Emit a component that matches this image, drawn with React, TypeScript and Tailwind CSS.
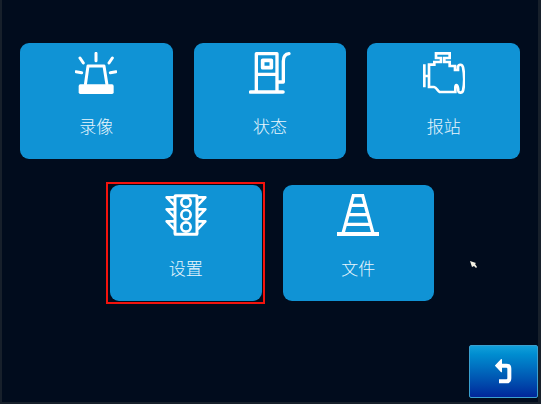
import type { ReactNode } from "react";

function Icon({ children }: { children: ReactNode }) {
  return (
    <svg
      viewBox="0 0 126 126"
      className="size-[42px] shrink-0"
      fill="none"
      stroke="white"
      strokeWidth="9"
      aria-hidden="true"
    >
      {children}
    </svg>
  );
}

const siren = (
  <Icon>
    <rect x="11" y="97" width="105" height="29" rx="5" fill="white" stroke="none" />
    <path d="M31 99 39 42H87L96 99" strokeLinejoin="round" />
    <path
      d="M63 4V26M15 18 25 33M112 18 102 33M3 59 20 62M123 59 106 62"
      strokeLinecap="round"
    />
  </Icon>
);

const pump = (
  <Icon>
    <path d="M22 120V5H84V120M22 67H84" strokeWidth="10" strokeLinejoin="round" />
    <rect x="41" y="25" width="26" height="22" strokeWidth="11" strokeLinejoin="round" />
    <path d="M5 120H102" strokeWidth="11" strokeLinecap="round" />
    <path
      d="M120 5C108 6 103 14 103 28V90H88"
      strokeWidth="10"
      strokeLinecap="round"
      strokeLinejoin="round"
    />
  </Icon>
);

const engine = (
  <Icon>
    <path d="M4 37V106M3 72H18" strokeWidth="8" />
    <path
      d="M18 38H34V30H54V18H39V4H80V18H64V30H80V42H96V54H105V44C107 36 118 36 120 46C124 66 124 98 120 116C118 124 107 124 106 116C105 95 97 96 97 106V120H50C44 118 41 106 33 105H18Z"
      strokeWidth="8"
    />
  </Icon>
);

const trafficLight = (
  <Icon>
    <rect x="30" y="5" width="66" height="116" rx="2" strokeWidth="9" />
    <circle cx="63" cy="25" r="14" strokeWidth="8" />
    <circle cx="63" cy="62" r="14" strokeWidth="8" />
    <circle cx="63" cy="99" r="14" strokeWidth="8" />
    <path
      d="M28 10H5L28 34M28 46H5L28 70M28 82H5L28 106M98 10H121L98 34M98 46H121L98 70M98 82H121L98 106"
      strokeWidth="8"
      strokeLinejoin="round"
    />
  </Icon>
);

const cone = (
  <Icon>
    <path d="M18 118 49 5H77L108 118M40 34H86M33 62H93M25 91H101" strokeWidth="10" />
    <path d="M0 120H126" strokeWidth="12" />
  </Icon>
);

type TileProps = { label: string; icon: ReactNode; selected?: boolean };

function Tile({ label, icon, selected = false }: TileProps) {
  return (
    <button
      type="button"
      className="relative flex h-[116px] w-full flex-col items-center gap-5 rounded-[9px] bg-[#1093d5] pt-[9px] text-[17px] leading-6 font-light text-[#e8f6fd]"
    >
      {icon}
      <span>{label}</span>
      {selected && (
        <span className="absolute -inset-[3px] -left-1 border-2 border-[#f3130d]" />
      )}
    </button>
  );
}

export default function App() {
  return (
    <div className="relative flex min-h-screen flex-col border-x-2 border-r-[3px] border-b-2 border-[#17202b] bg-[#010c1d] font-['Noto_Sans_CJK_SC',sans-serif]">
      <main className="flex flex-1 flex-col gap-[26px] px-[18px] pt-[43px]">
        <div className="grid grid-cols-3 gap-[21px]">
          <Tile label="录像" icon={siren} />
          <Tile label="状态" icon={pump} />
          <Tile label="报站" icon={engine} />
        </div>
        <div className="grid grid-cols-6 gap-[21px] pl-1">
          <div className="col-span-2 col-start-2">
            <Tile label="设置" icon={trafficLight} selected />
          </div>
          <div className="col-span-2">
            <Tile label="文件" icon={cone} />
          </div>
        </div>
      </main>
      <footer className="flex justify-end pb-1">
        <button
          type="button"
          aria-label="返回"
          className="flex h-[53px] w-[69px] items-center justify-center rounded-xs border border-[#3aa0cf] bg-linear-to-b from-[#12a0da] to-[#04259a]"
        >
          <svg viewBox="0 0 51 75" className="h-[25px] w-[17px]" fill="none" aria-hidden="true">
            <path d="M2 20 19 2V38Z" fill="white" stroke="white" strokeWidth="4" strokeLinejoin="round" />
            <path
              d="M14 20H34Q43 20 43 29V58Q43 67 34 67H12"
              stroke="white"
              strokeWidth="12"
            />
          </svg>
        </button>
      </footer>
      <svg
        viewBox="0 0 8 9"
        className="absolute top-[261px] left-[468px] h-[9px] w-2"
        aria-hidden="true"
      >
        <path d="M0 0 6 2 5 3 7 6 6 7 4 5 2 6Z" fill="#f4f1e4" />
      </svg>
    </div>
  );
}
